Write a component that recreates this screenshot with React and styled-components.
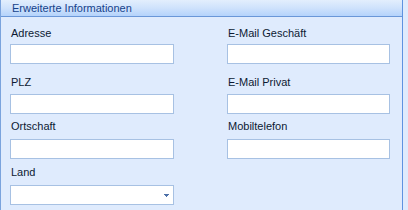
import React from "react";
import styled, { createGlobalStyle } from "styled-components";

const Global = createGlobalStyle`
  html, body { margin: 0; padding: 0; background: #dfebfd; overflow: hidden; }
  body { font-family: "Liberation Sans", Arial, sans-serif; }
`;

const Panel = styled.div`
  width: 401px;
  height: 100vh;
  border-left: 1px solid #7aa3dd;
  border-right: 1px solid #5f93e0;
  background: #dfebfd;
`;

const Header = styled.div`
  height: 16px;
  border-bottom: 1px solid #6a97d8;
  background: linear-gradient(to bottom, #e3eefd 0%, #cfe2fc 50%, #b4d3fb 100%);
  color: #15428b;
  font-size: 11px;
  line-height: 16px;
  padding-left: 11px;
  white-space: nowrap;
`;

const Grid = styled.div`
  display: grid;
  grid-template-columns: 164px 163px;
  column-gap: 53px;
  padding-left: 9px;
`;

const Field = styled.div`
  display: flex;
  flex-direction: column;
  margin-top: ${(p) => p.$top}px;
`;

const Label = styled.div`
  height: 14px;
  line-height: 14px;
  font-size: 11px;
  color: #0d1a33;
  padding-left: 1px;
  margin-bottom: ${(p) => p.$gap}px;
  white-space: nowrap;
`;

const Input = styled.div`
  box-sizing: border-box;
  height: 20px;
  background: #ffffff;
  border: 1px solid #a7c1e3;
  position: relative;
`;

const Arrow = styled.svg`
  position: absolute;
  right: 4px;
  top: 8px;
`;

const Empty = styled.div``;

export default function App() {
  return (
    <>
      <Global />
      <Panel>
        <Header>Erweiterte Informationen</Header>
        <Grid>
          <Field $top={9}>
            <Label $gap={4}>Adresse</Label>
            <Input />
          </Field>
          <Field $top={9}>
            <Label $gap={4}>E-Mail Geschäft</Label>
            <Input />
          </Field>
          <Field $top={11}>
            <Label $gap={5}>PLZ</Label>
            <Input />
          </Field>
          <Field $top={11}>
            <Label $gap={5}>E-Mail Privat</Label>
            <Input />
          </Field>
          <Field $top={5}>
            <Label $gap={6}>Ortschaft</Label>
            <Input />
          </Field>
          <Field $top={5}>
            <Label $gap={6}>Mobiltelefon</Label>
            <Input />
          </Field>
          <Field $top={6}>
            <Label $gap={6}>Land</Label>
            <Input>
              <Arrow width="5" height="4" viewBox="0 0 5 4">
                <rect x="0" y="0" width="5" height="1" fill="#4d70a8" />
                <rect x="1" y="1" width="3" height="1" fill="#4d70a8" />
                <rect x="2" y="2" width="1" height="1" fill="#4d70a8" />
              </Arrow>
            </Input>
          </Field>
          <Empty />
        </Grid>
      </Panel>
    </>
  );
}
